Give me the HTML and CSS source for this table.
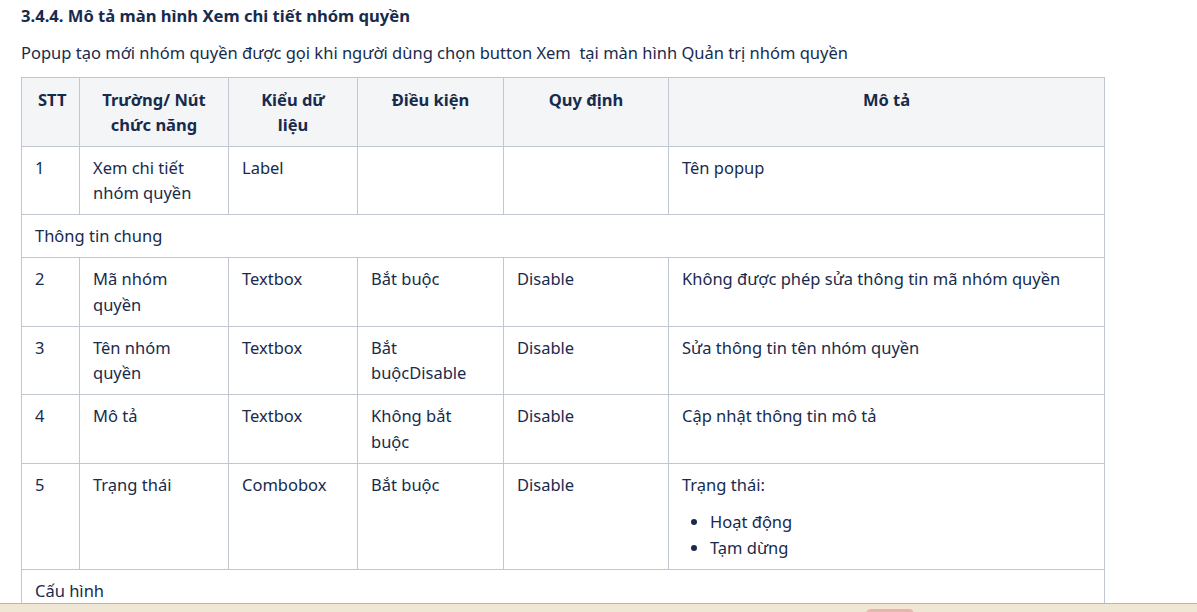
FILE: index.html
```html
<!DOCTYPE html>
<html lang="vi">
<head>
<meta charset="utf-8">
<title>Mô tả màn hình Xem chi tiết nhóm quyền</title>
<link rel="stylesheet" href="styles.css">
</head>
<body>
<main class="page">
  <h3 class="title">3.4.4. Mô tả màn hình Xem chi tiết nhóm quyền</h3>
  <p class="intro">Popup tạo mới nhóm quyền được gọi khi người dùng chọn button Xem&nbsp; tại màn hình Quản trị nhóm quyền</p>
  <table class="spec">
    <colgroup>
      <col class="c-stt">
      <col class="c-field">
      <col class="c-type">
      <col class="c-cond">
      <col class="c-rule">
      <col class="c-desc">
    </colgroup>
    <thead>
      <tr>
        <th>STT</th>
        <th>Trường/ Nút chức năng</th>
        <th>Kiểu dữ liệu</th>
        <th>Điều kiện</th>
        <th>Quy định</th>
        <th>Mô tả</th>
      </tr>
    </thead>
    <tbody>
      <tr>
        <td>1</td>
        <td>Xem chi tiết nhóm quyền</td>
        <td>Label</td>
        <td></td>
        <td></td>
        <td>Tên popup</td>
      </tr>
      <tr class="group">
        <td colspan="6">Thông tin chung</td>
      </tr>
      <tr>
        <td>2</td>
        <td>Mã nhóm quyền</td>
        <td>Textbox</td>
        <td>Bắt buộc</td>
        <td>Disable</td>
        <td>Không được phép sửa thông tin mã nhóm quyền</td>
      </tr>
      <tr>
        <td>3</td>
        <td>Tên nhóm quyền</td>
        <td>Textbox</td>
        <td>Bắt buộcDisable</td>
        <td>Disable</td>
        <td>Sửa thông tin tên nhóm quyền</td>
      </tr>
      <tr>
        <td>4</td>
        <td>Mô tả</td>
        <td>Textbox</td>
        <td>Không bắt buộc</td>
        <td>Disable</td>
        <td>Cập nhật thông tin mô tả</td>
      </tr>
      <tr>
        <td>5</td>
        <td>Trạng thái</td>
        <td>Combobox</td>
        <td>Bắt buộc</td>
        <td>Disable</td>
        <td>
          <p class="cell-p">Trạng thái:</p>
          <ul class="cell-list">
            <li>Hoạt động</li>
            <li>Tạm dừng</li>
          </ul>
        </td>
      </tr>
      <tr class="group">
        <td colspan="6">Cấu hình</td>
      </tr>
    </tbody>
  </table>
</main>
<div class="taskbar"><span class="taskbar-pill"></span></div>
</body>
</html>
```
FILE: styles.css
```css
html, body {
  margin: 0;
  padding: 0;
  background: #ffffff;
}
body {
  font-family: "Noto Sans", "Open Sans", "Liberation Sans", sans-serif;
  font-size: 16.5px;
  line-height: 25px;
  color: #172b4d;
}
.page {
  padding: 4px 0 0 21px;
}
.title {
  margin: 0;
  font-size: 16.6px;
  line-height: 24px;
  font-weight: 700;
}
.intro {
  margin: 12px 0 12px;
  line-height: 25px;
}
.spec {
  border-collapse: collapse;
  table-layout: fixed;
  width: 1083px;
}
.c-stt { width: 58px; }
.c-field { width: 149px; }
.c-type { width: 129px; }
.c-cond { width: 146px; }
.c-rule { width: 165px; }
.c-desc { width: 436px; }
.spec th,
.spec td {
  border: 1px solid #c1c7d0;
  padding: 8.25px 13px;
  vertical-align: top;
  text-align: left;
  line-height: 25.5px;
}
.spec th {
  background: #f4f5f7;
  font-weight: 700;
  text-align: center;
  padding: 8.5px 16px 8px;
}
.cell-p {
  margin: 0 0 12px;
}
.cell-list {
  margin: 0;
  padding-left: 28px;
}
.taskbar {
  position: fixed;
  left: 0;
  right: 0;
  bottom: 0;
  height: 8px;
  background: #efe6d3;
  border-top: 1px solid #bdb5a6;
}
.taskbar-pill {
  position: absolute;
  left: 866px;
  top: 5px;
  width: 48px;
  height: 10px;
  border-radius: 5px;
  background: #e8b4ae;
}
```
